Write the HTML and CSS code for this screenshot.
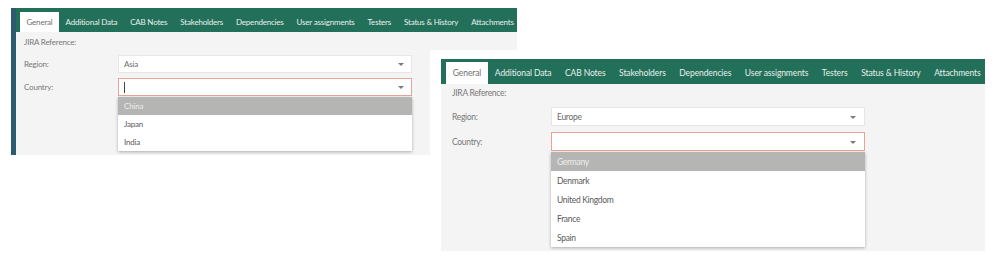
FILE: index.html
```html
<!DOCTYPE html>
<html lang="en">
<head>
    <meta charset="UTF-8">
    <title>Change Request - Country Picker</title>
    <link rel="stylesheet" href="styles.css">
</head>
<body>
    <!-- First capture: Asia -->
    <div class="panel panel-small">
        <nav class="tabs">
            <span class="tab active">General</span>
            <span class="tab">Additional Data</span>
            <span class="tab">CAB Notes</span>
            <span class="tab">Stakeholders</span>
            <span class="tab">Dependencies</span>
            <span class="tab">User assignments</span>
            <span class="tab">Testers</span>
            <span class="tab">Status &amp; History</span>
            <span class="tab">Attachments</span>
        </nav>
        <div class="form">
            <div class="row row-ref"><label>JIRA Reference:</label></div>
            <div class="row">
                <label>Region:</label>
                <div class="field">
                    <div class="select">Asia<span class="caret"></span></div>
                </div>
            </div>
            <div class="row">
                <label>Country:</label>
                <div class="field">
                    <div class="select invalid"><span class="cursor"></span><span class="caret"></span></div>
                    <ul class="dropdown">
                        <li class="highlight">China</li>
                        <li>Japan</li>
                        <li>India</li>
                    </ul>
                </div>
            </div>
        </div>
    </div>

    <!-- Second capture: Europe, pasted over the first -->
    <div class="shot">
        <div class="panel panel-large">
            <nav class="tabs">
                <span class="tab active">General</span>
                <span class="tab">Additional Data</span>
                <span class="tab">CAB Notes</span>
                <span class="tab">Stakeholders</span>
                <span class="tab">Dependencies</span>
                <span class="tab">User assignments</span>
                <span class="tab">Testers</span>
                <span class="tab">Status &amp; History</span>
                <span class="tab">Attachments</span>
            </nav>
            <div class="form">
                <div class="row row-ref"><label>JIRA Reference:</label></div>
                <div class="row">
                    <label>Region:</label>
                    <div class="field">
                        <div class="select">Europe<span class="caret"></span></div>
                    </div>
                </div>
                <div class="row">
                    <label>Country:</label>
                    <div class="field">
                        <div class="select invalid"><span class="caret"></span></div>
                        <ul class="dropdown">
                            <li class="highlight">Germany</li>
                            <li>Denmark</li>
                            <li>United Kingdom</li>
                            <li>France</li>
                            <li>Spain</li>
                        </ul>
                    </div>
                </div>
            </div>
        </div>
    </div>
</body>
</html>
```

FILE: styles.css
```css
:root {
    --green: #23705a;
    --edge: #2c5a6e;
    --panel-bg: #f4f4f4;
    --label: #787878;
    --text: #5a5a5a;
    --invalid: #e9a497;
    --highlight: #b5b5b4;
}

* {
    margin: 0;
    padding: 0;
    box-sizing: border-box;
}

body {
    background: #fff;
    font-family: Lato, 'Open Sans', sans-serif;
    color: var(--text);
    width: 1000px;
    height: 266px;
    overflow: hidden;
    position: relative;
}

.panel {
    background: var(--panel-bg);
    display: flex;
    flex-direction: column;
}

.tabs {
    background: var(--green);
    display: flex;
    align-items: flex-end;
}

.tab {
    color: #e6efea;
    white-space: nowrap;
    display: flex;
    align-items: center;
}

.tab.active {
    background: #fff;
    color: #707070;
}

.form {
    display: flex;
    flex-direction: column;
}

.row {
    display: flex;
    align-items: center;
}

.row label {
    color: var(--label);
    flex: none;
}

.field {
    position: relative;
}

.select {
    background: #fff;
    border: 1px solid #e6e6e6;
    display: flex;
    align-items: center;
    position: relative;
    height: 100%;
    color: #6a6a6a;
}

.select.invalid {
    border-color: var(--invalid);
}

.caret {
    position: absolute;
    top: 50%;
    margin-top: -1px;
    width: 0;
    height: 0;
    border-left: 3px solid transparent;
    border-right: 3px solid transparent;
    border-top: 3px solid #7a7a7a;
}

.cursor {
    width: 1px;
    background: #444;
}

.dropdown {
    list-style: none;
    position: absolute;
    left: 0;
    right: 0;
    background: #fff;
    box-shadow: 0 1px 3px rgba(0, 0, 0, 0.3);
    z-index: 5;
}

.dropdown li {
    display: flex;
    align-items: center;
    color: var(--text);
}

.dropdown li.highlight {
    background: var(--highlight);
    color: #eeeeee;
}

/* first capture, smaller scale */
.panel-small {
    margin: 8px 0 0 11px;
    width: 506px;
    height: 147px;
    border-left: 5px solid var(--edge);
    font-size: 8px;
    letter-spacing: -0.2px;
}

.panel-small .tabs {
    height: 24px;
    padding-left: 4px;
}

.panel-small .tab {
    height: 20px;
    padding: 0 6.5px;
}

.panel-small .form {
    padding: 2px 0 0 8px;
}

.panel-small .row {
    height: 18px;
    margin-top: 5px;
}

.panel-small .row-ref {
    height: 16px;
    margin-top: 0;
}

.panel-small .row label {
    width: 94px;
}

.panel-small .field {
    width: 294px;
    height: 18px;
}

.panel-small .select {
    padding-left: 5px;
}

.panel-small .caret {
    right: 7px;
}

.panel-small .cursor {
    height: 11px;
}

.panel-small .dropdown {
    top: 19px;
}

.panel-small .dropdown li {
    height: 18px;
    padding-left: 6px;
}

/* second capture, pasted on top with its own white margin */
.shot {
    position: absolute;
    left: 430px;
    top: 50px;
    width: 570px;
    height: 206px;
    background: #fff;
    padding: 9px 15px 0 11px;
    z-index: 10;
}

.panel-large {
    height: 192px;
    font-size: 8.5px;
    letter-spacing: -0.3px;
}

.panel-large .tabs {
    height: 25px;
    padding-left: 5px;
}

.panel-large .tab {
    height: 22px;
    padding: 0 6.8px;
    letter-spacing: -0.1px;
}

.panel-large .form {
    padding: 1px 0 0 11px;
}

.panel-large .row {
    height: 19px;
    margin-top: 6px;
}

.panel-large .row-ref {
    height: 16px;
    margin-top: 0;
}

.panel-large .row label {
    width: 99px;
}

.panel-large .field {
    width: 314px;
    height: 19px;
}

.panel-large .select {
    padding-left: 5px;
}

.panel-large .caret {
    right: 8px;
}

.panel-large .dropdown {
    top: 20px;
}

.panel-large .dropdown li {
    height: 19px;
    padding-left: 6px;
}
```
